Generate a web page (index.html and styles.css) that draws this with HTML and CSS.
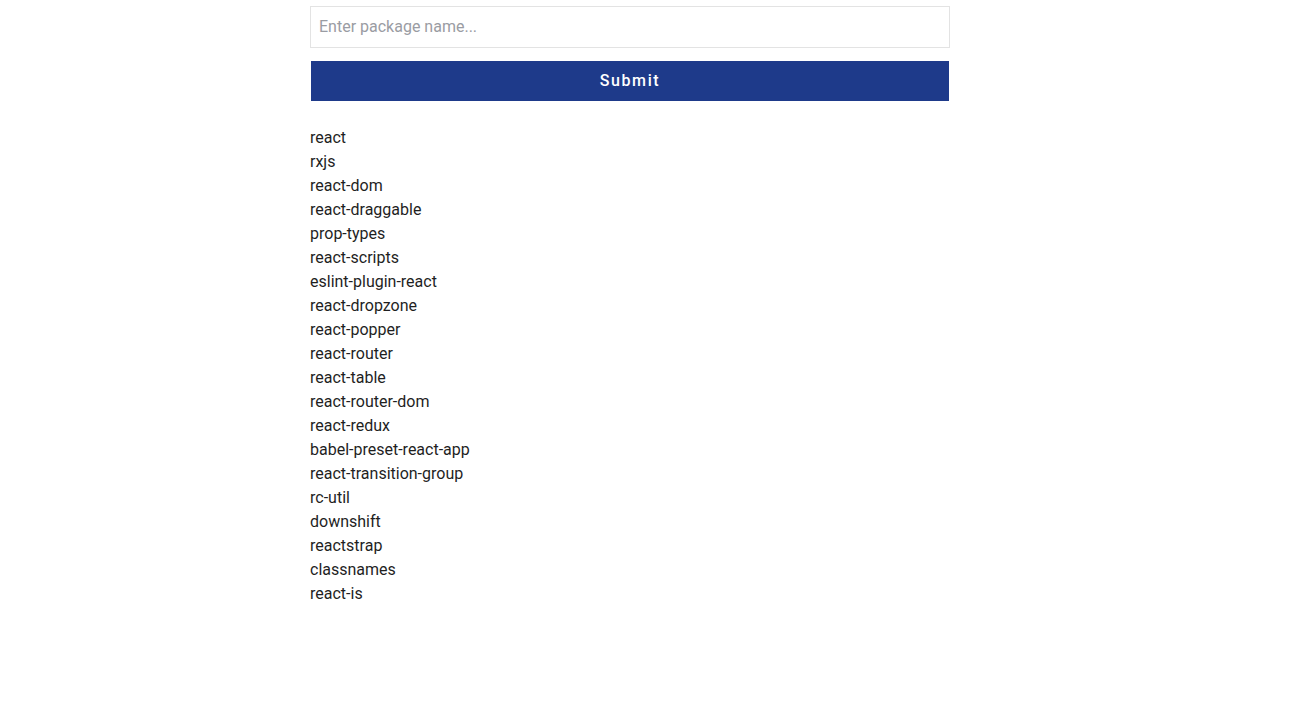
FILE: index.html
```html
<!DOCTYPE html>
<html>
<head>
<meta charset="utf-8">
<link rel="stylesheet" href="styles.css">
</head>
<body>
<main class="container">
  <form class="search">
    <input class="search-input" type="text" placeholder="Enter package name...">
    <button class="submit" type="button">Submit</button>
  </form>
  <ul class="packages">
    <li>react</li>
    <li>rxjs</li>
    <li>react-dom</li>
    <li>react-draggable</li>
    <li>prop-types</li>
    <li>react-scripts</li>
    <li>eslint-plugin-react</li>
    <li>react-dropzone</li>
    <li>react-popper</li>
    <li>react-router</li>
    <li>react-table</li>
    <li>react-router-dom</li>
    <li>react-redux</li>
    <li>babel-preset-react-app</li>
    <li>react-transition-group</li>
    <li>rc-util</li>
    <li>downshift</li>
    <li>reactstrap</li>
    <li>classnames</li>
    <li>react-is</li>
  </ul>
</main>
</body>
</html>
```

FILE: styles.css
```css
html, body {
  margin: 0;
  padding: 0;
  background: #ffffff;
}
body {
  font-family: Roboto, "Liberation Sans", sans-serif;
  color: #1f1f1f;
}
.container {
  width: 640px;
  margin: 6px 0 0 310px;
}
.search {
  display: flex;
  flex-direction: column;
  gap: 13px;
  margin: 0;
}
.search-input {
  box-sizing: border-box;
  width: 640px;
  height: 42px;
  border: 1px solid #e3e3e3;
  border-radius: 0;
  padding: 0 8px 2px 8px;
  font-family: Roboto, "Liberation Sans", sans-serif;
  font-size: 16px;
  color: #222;
  outline: none;
}
.search-input::placeholder {
  color: #9a9ca3;
}
.submit {
  box-sizing: border-box;
  width: 638px;
  height: 40px;
  margin-left: 1px;
  padding: 0 0 2px 0;
  border: none;
  background: #1e3a8a;
  color: #ffffff;
  font-family: Roboto, "Liberation Sans", sans-serif;
  font-size: 16px;
  font-weight: 500;
  letter-spacing: 0.1em;
  cursor: pointer;
}
.packages {
  list-style: none;
  margin: 25px 0 0 0;
  padding: 0;
  font-size: 16px;
  line-height: 24px;
}
```
